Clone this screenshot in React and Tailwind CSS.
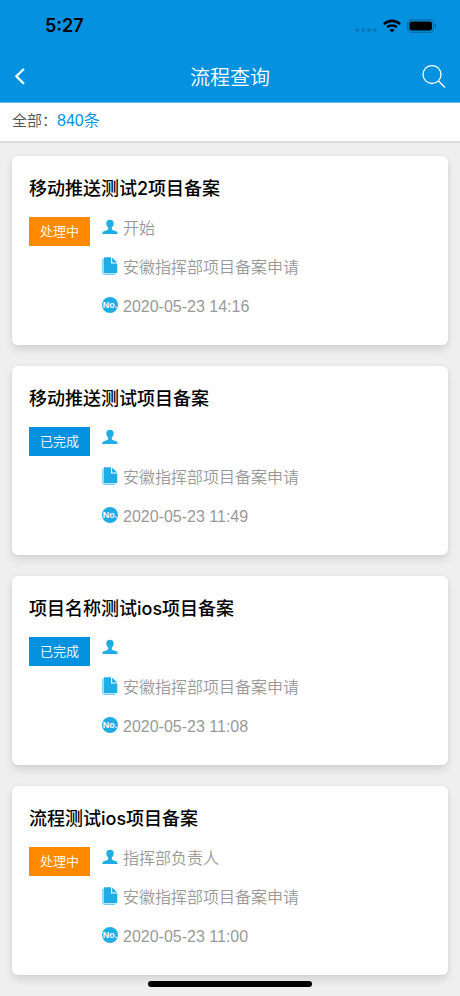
import { useState } from "react";

const records = [
  { id: 1, title: "移动推送测试2项目备案", done: false, node: "开始", name: "安徽指挥部项目备案申请", time: "2020-05-23 14:16" },
  { id: 2, title: "移动推送测试项目备案", done: true, node: "", name: "安徽指挥部项目备案申请", time: "2020-05-23 11:49" },
  { id: 3, title: "项目名称测试ios项目备案", done: true, node: "", name: "安徽指挥部项目备案申请", time: "2020-05-23 11:08" },
  { id: 4, title: "流程测试ios项目备案", done: false, node: "指挥部负责人", name: "安徽指挥部项目备案申请", time: "2020-05-23 11:00" },
];

const UserIcon = () => (
  <svg width="16" height="16" viewBox="0 0 16 16" fill="#20ace5" aria-hidden="true">
    <path d="M8 0.800C5.600 0.800 4.300 2.100 4.300 4.300c0 2 .8 3.400 1.900 4.300v1.500c0 .5-.3.800-.8 1L1.900 12.300C.8 12.700.4 13.400.3 15h15.400c-.1-1.600-.5-2.300-1.600-2.700l-3.500-1.200c-.5-.2-.8-.5-.8-1V8.600c1.100-.9 1.900-2.300 1.900-4.300C11.700 2.100 10.400.8 8 .8z" />
  </svg>
);

const FileIcon = () => (
  <svg width="16" height="18" viewBox="0 0 16 18" fill="#20ace5" aria-hidden="true">
    <path d="M3 0.200h6v6.300h6.300v8.400c0 .8-.5 1.300-1.300 1.300H3c-.8 0-1.300-.5-1.300-1.300V1.500C1.700.7 2.200.2 3 .2z" />
    <path d="M10.100 0.400l5.100 5.100h-5.100z" />
    <path d="M0.800 2v13.800c0 1 .6 1.600 1.600 1.600h10.600" fill="none" stroke="#20ace5" strokeWidth="0.700" />
  </svg>
);

const NoIcon = () => (
  <span className="flex size-4 items-center justify-center rounded-full bg-[#20ace5] font-['Liberation_Sans',sans-serif] text-[9px] leading-none font-bold text-white">
    No.
  </span>
);

const SignalIcons = () => (
  <div className="flex items-center gap-[6px]">
    <svg width="22" height="18" viewBox="0 0 22 18" fill="#0878b5" aria-hidden="true">
      <circle cx="2.500" cy="13" r="1.900" />
      <circle cx="8.200" cy="13" r="1.900" />
      <circle cx="13.900" cy="13" r="1.900" />
      <circle cx="19.600" cy="13" r="1.900" />
    </svg>
    <svg width="18" height="14" viewBox="0 0 18 14" fill="none" stroke="#000" aria-hidden="true">
      <path d="M1 5.100C5.400 0.800 12.600 0.800 17 5.100" strokeWidth="2.600" />
      <path d="M4.200 8.200c2.700-2.500 6.900-2.500 9.600 0" strokeWidth="2.400" />
      <path d="M9 13.500l-2.500-2.600c1.400-1.300 3.600-1.300 5 0z" fill="#000" stroke="none" />
    </svg>
    <svg width="30" height="14" viewBox="0 0 30 14" aria-hidden="true">
      <rect x="0.700" y="0.700" width="26" height="12.600" rx="3.900" fill="none" stroke="#05629a" strokeWidth="1.100" />
      <rect x="2.400" y="2.400" width="22.600" height="9.200" rx="2.300" fill="#000" />
      <path d="M28 4.800c1.600.6 1.600 3.800 0 4.400z" fill="#05629a" />
    </svg>
  </div>
);

function MetaRow({ icon, children }) {
  return (
    <li className="flex h-[39px] items-center gap-[5px]">
      <span className="flex w-4 justify-center pb-[3px]">{icon}</span>
      <span>{children}</span>
    </li>
  );
}

function RecordCard({ record }) {
  return (
    <article className="rounded-md bg-white px-[17px] pt-[21px] pb-[19px] shadow-[0_5px_8px_rgba(0,0,0,0.1),0_0_5px_rgba(0,0,0,0.05)]">
      <h2 className="mb-2 text-lg leading-6 font-medium text-black">{record.title}</h2>
      <div className="flex items-start gap-3">
        <span
          className={`mt-2 w-[61px] text-center text-[13px] leading-[29px] font-[350] text-white ${
            record.done ? "bg-[#0492e0]" : "bg-[#ff8a00]"
          }`}
        >
          {record.done ? "已完成" : "处理中"}
        </span>
        <ul className="font-['Liberation_Sans','Noto_Sans_CJK_SC',sans-serif] text-base font-[350] text-[#999]">
          <MetaRow icon={<UserIcon />}>{record.node}</MetaRow>
          <MetaRow icon={<FileIcon />}>{record.name}</MetaRow>
          <MetaRow icon={<NoIcon />}>{record.time}</MetaRow>
        </ul>
      </div>
    </article>
  );
}

export default function App() {
  const [list] = useState(records);

  return (
    <div className="min-h-screen bg-[#efefef] font-['Inter','Noto_Sans_CJK_SC',sans-serif]">
      <header className="border-b border-[#5fc0f2] bg-[#0492e0]">
        <div className="flex h-[52px] items-center justify-between pr-[23px] pl-[45px]">
          <span className="text-lg leading-6 font-semibold text-black">5:27</span>
          <SignalIcons />
        </div>
        <div className="grid h-[50px] grid-cols-[40px_1fr_40px] items-center px-[14px]">
          <button type="button" aria-label="返回" className="justify-self-start text-white">
            <svg width="12" height="18" viewBox="0 0 12 18" fill="none" stroke="currentColor" strokeWidth="2.300" strokeLinecap="round" strokeLinejoin="round">
              <path d="M9.300 1.500L2.300 8.300l7 6.800" />
            </svg>
          </button>
          <h1 className="pt-px text-center text-xl font-[350] text-white">流程查询</h1>
          <button type="button" aria-label="搜索" className="justify-self-end text-white">
            <svg width="24" height="24" viewBox="0 0 24 24" fill="none" stroke="currentColor" strokeWidth="1.300">
              <circle cx="10" cy="9.500" r="9" />
              <path d="M16.500 16l6.500 6.500" />
            </svg>
          </button>
        </div>
      </header>

      <p className="border-b-2 border-[#dcdcdc] bg-white px-3 pt-[6px] pb-2 font-['Liberation_Sans','Noto_Sans_CJK_SC',sans-serif] text-[15px] leading-6 font-[350] text-[#555]">
        全部：<span className="text-base leading-6 text-[#0492e0]">840条</span>
      </p>

      <main className="flex flex-col gap-[21px] px-3 pt-[13px] pb-5">
        {list.map((record) => (
          <RecordCard key={record.id} record={record} />
        ))}
      </main>

      {/* home indicator */}
      <div className="fixed bottom-[9px] left-1/2 h-[6px] w-[164px] -translate-x-1/2 rounded-full bg-black" />
    </div>
  );
}
